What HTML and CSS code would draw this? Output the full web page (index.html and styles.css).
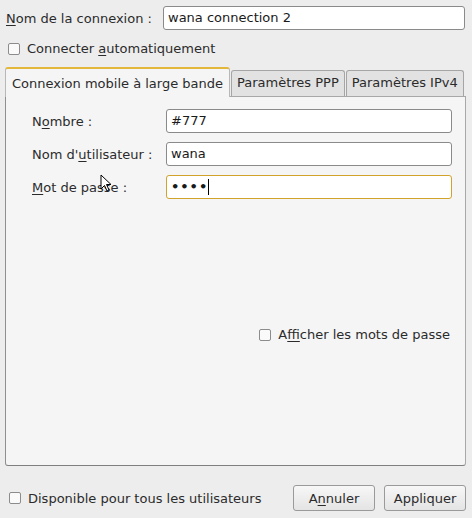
FILE: index.html
```html
<!DOCTYPE html>
<html lang="fr">
<head>
    <meta charset="UTF-8">
    <title>Modification de la connexion</title>
    <link rel="stylesheet" href="styles.css">
</head>
<body>
    <div class="dialog">
        <div class="name-row">
            <label class="name-label"><u>N</u>om de la connexion :</label>
            <div class="entry name-entry">wana connection 2</div>
        </div>

        <div class="check-row auto-row">
            <span class="check"></span>
            <span>Connecter <u>a</u>utomatiquement</span>
        </div>

        <div class="tabs">
            <div class="tab active">Connexion mobile à large bande</div>
            <div class="tab">Paramètres PPP</div>
            <div class="tab">Paramètres IPv4</div>
        </div>

        <div class="panel">
            <div class="form">
                <label>N<u>o</u>mbre :</label>
                <div class="entry">#777</div>

                <label>Nom d'<u>u</u>tilisateur :</label>
                <div class="entry">wana</div>

                <label><u>M</u>ot de passe :</label>
                <div class="entry focused"><span class="dots">••••</span><span class="caret"></span></div>
            </div>

            <div class="check-row show-row">
                <span class="check"></span>
                <span>A<u>f</u>ficher les mots de passe</span>
            </div>
        </div>

        <div class="footer">
            <div class="check-row">
                <span class="check"></span>
                <span>Disponible pour tous les utilisateurs</span>
            </div>
            <div class="buttons">
                <button>A<u>n</u>nuler</button>
                <button>Appliquer</button>
            </div>
        </div>

        <!-- pointeur de souris -->
        <svg class="pointer" width="14" height="20" viewBox="0 0 14 20">
            <path d="M1 1 L1 15 L4.5 11.5 L7 17 L9 16 L6.5 10.5 L11 10.5 Z" fill="#fff" stroke="#000" stroke-width="1" stroke-linejoin="round"/>
        </svg>
    </div>
</body>
</html>
```

FILE: styles.css
```css
* {
    box-sizing: border-box;
}

body {
    margin: 0;
    background: #ededed;
    font-family: 'DejaVu Sans', sans-serif;
    font-size: 13px;
    color: #2b2b2b;
}

u {
    text-decoration-thickness: 1px;
    text-underline-offset: 2px;
}

.dialog {
    position: relative;
    width: 472px;
    height: 518px;
    padding: 6px 6px 0 5px;
}

.name-row {
    display: flex;
    align-items: center;
    padding-right: 1px;
}

.name-label {
    width: 158px;
    padding-left: 1px;
}

.entry {
    height: 24px;
    line-height: 22px;
    padding: 0 4px;
    background: #fff;
    border: 1px solid #8a8a8a;
    border-radius: 3px;
    color: #1a1a1a;
    white-space: nowrap;
}

.name-entry {
    flex: 1;
}

.entry.focused {
    border-color: #d2a32a;
    display: flex;
    align-items: center;
}

.dots {
    letter-spacing: 1px;
    font-size: 13px;
    font-weight: bold;
}

.caret {
    width: 1px;
    height: 16px;
    background: #000;
}

.check-row {
    display: flex;
    align-items: center;
    gap: 7px;
}

.check {
    width: 12px;
    height: 12px;
    border: 1px solid #8c8c8c;
    border-radius: 2px;
    background: #fafafa;
}

.auto-row {
    margin: 11px 0 0 3px;
}

.tabs {
    display: flex;
    align-items: flex-end;
    margin-top: 10px;
    height: 30px;
}

.tab {
    height: 26px;
    line-height: 24px;
    padding: 0 5px;
    background: #e2e2e2;
    border: 1px solid #a5a5a5;
    border-bottom: none;
    border-radius: 3px 3px 0 0;
    margin-left: 1px;
}

.tab.active {
    height: 30px;
    line-height: 30px;
    padding: 0 6px;
    margin-left: 0;
    margin-bottom: -1px;
    position: relative;
    background: #f5f5f5;
    border-color: #b8b8b8;
    border-top: 2px solid #e3b83a;
}

.panel {
    height: 370px;
    background: #f5f5f5;
    border: 1px solid #a8a8a8;
    border-radius: 0 0 3px 3px;
    border-bottom-color: #7f7f7f;
    border-left-color: #8f8f8f;
    padding: 12px 13px 0 26px;
}

.form {
    display: grid;
    grid-template-columns: 134px 1fr;
    row-gap: 9px;
    align-items: center;
}

.show-row {
    justify-content: flex-end;
    margin-top: 128px;
    margin-right: 2px;
}

.footer {
    display: flex;
    justify-content: space-between;
    align-items: center;
    margin-top: 19px;
    padding-left: 4px;
}

.buttons {
    display: flex;
    gap: 9px;
}

button {
    width: 82px;
    height: 26px;
    font-family: inherit;
    font-size: 13px;
    color: #2b2b2b;
    background: linear-gradient(#f7f7f7, #e4e4e4);
    border: 1px solid #9a9a9a;
    border-radius: 3px;
    padding: 0;
}

.pointer {
    position: absolute;
    left: 100px;
    top: 174px;
}
```
